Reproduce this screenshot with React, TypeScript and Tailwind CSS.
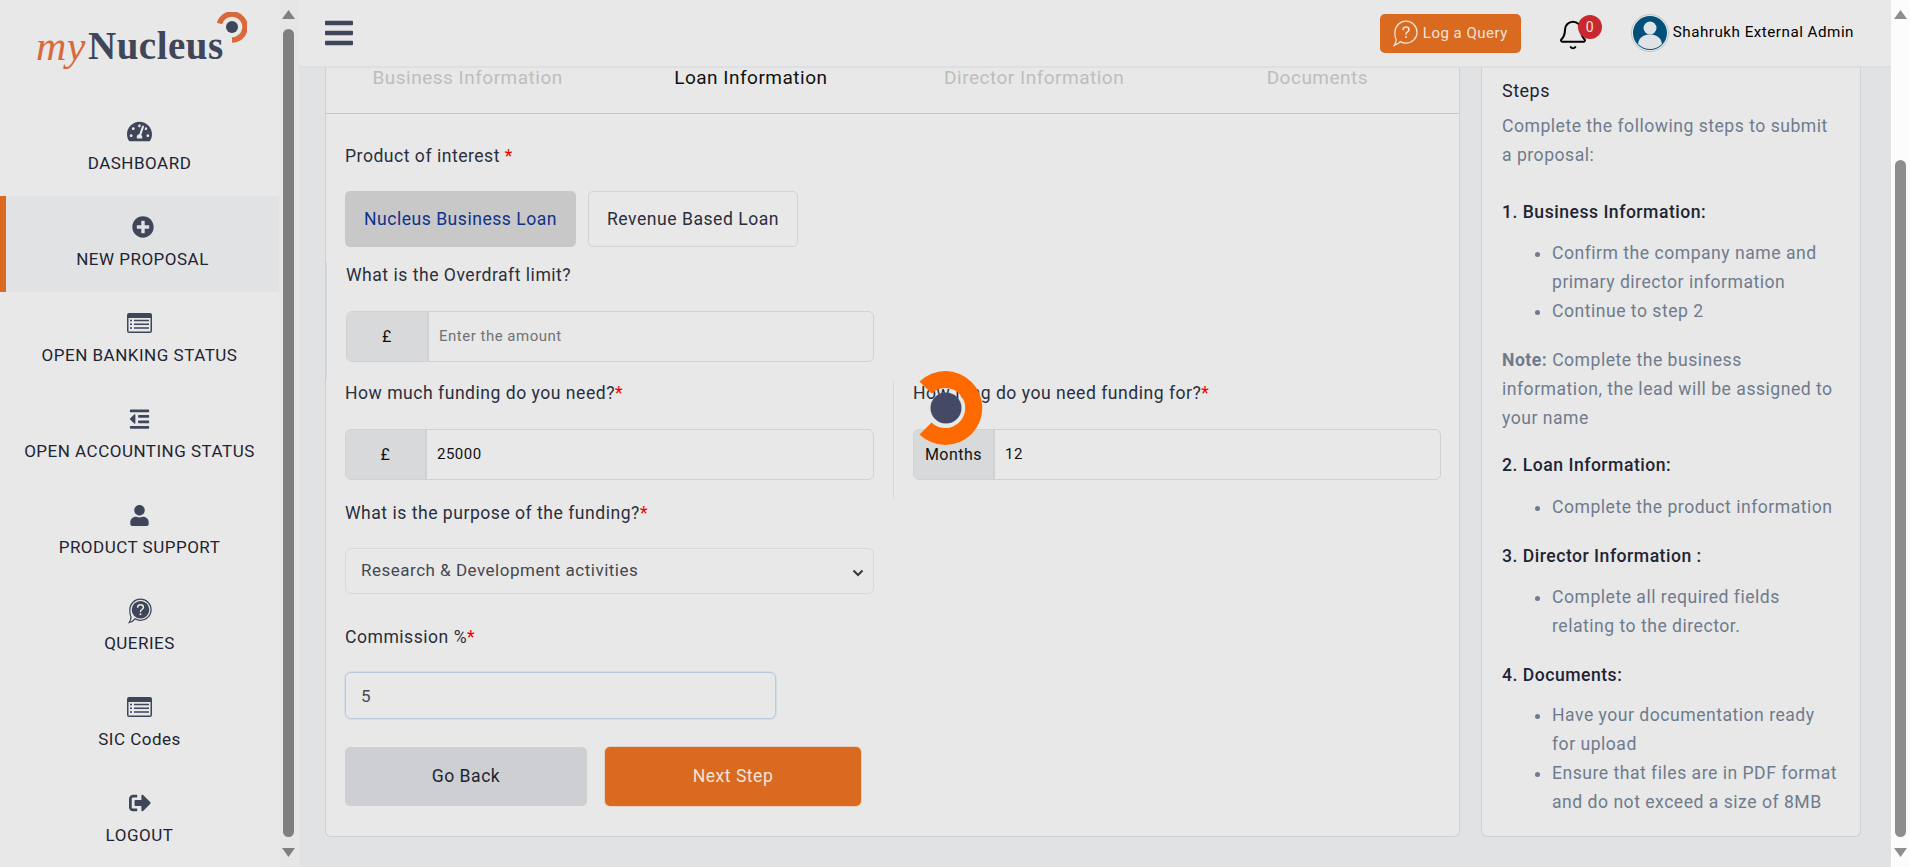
import type { ReactNode } from "react";
import { FaBars, FaOutdent, FaPlusCircle, FaSignOutAlt, FaTachometerAlt, FaUser } from "react-icons/fa";
import { Bell } from "lucide-react";

function QueryBubble({ className, fill, stroke, mark }: { className?: string; fill: string; stroke: string; mark: string }) {
  return (
    <svg className={className} viewBox="0 0 24 26" fill="none">
      <path d="M12.5 1.2c5.900 0 10.600 4.700 10.600 10.500s-4.700 10.600-10.600 10.600c-2 0-3.900-.5-5.500-1.500-1.300 1.900-3.300 3-5.800 3.700 1.100-1.700 1.800-3.500 1.900-5.700C1.900 17 1.800 14.400 1.800 11.700 1.800 5.900 6.600 1.200 12.500 1.200z" stroke={stroke} strokeWidth="1.200" />
      <circle cx="12.500" cy="11.700" r="8.800" fill={fill} />
      <path d="M9.600 9.200c.2-1.600 1.400-2.500 2.900-2.500 1.600 0 2.900 1 2.900 2.500 0 2.300-2.900 2.300-2.900 4.400" stroke={mark} strokeWidth="1.500" strokeLinecap="round" />
      <circle cx="12.500" cy="16.300" r="1" fill={mark} />
    </svg>
  );
}

// list-alt with the thick title band along the top
function ListBox() {
  return (
    <svg className="h-[20px] w-[25px]" viewBox="0 0 25 20">
      <rect width="25" height="20" rx="2" fill="#3f4659" />
      <rect x="1.500" y="5" width="22" height="13.500" fill="#e8e8e8" />
      <path d="M7 7.500h15M7 11.200h15M7 15h15" stroke="#3f4659" strokeWidth="1.500" />
      <path d="M3 7.500h2M3 11.200h2M3 15h2" stroke="#3f4659" strokeWidth="1.500" />
    </svg>
  );
}

function ScrollTrack({ track, thumb, arrow }: { track: string; thumb: string; arrow: string }) {
  return (
    <div className={`flex h-[867px] w-[19px] shrink-0 flex-col items-center ${track}`}>
      <svg className={`mt-[10px] h-[9px] w-[13px] ${arrow}`} viewBox="0 0 13 9" fill="currentColor">
        <path d="M6.500 0 13 9H0z" />
      </svg>
      <div className={`w-[11px] flex-1 rounded-[6px] ${thumb}`} />
      <svg className={`mb-[10px] mt-[11px] h-[9px] w-[13px] ${arrow}`} viewBox="0 0 13 9" fill="currentColor">
        <path d="M0 0h13L6.500 9z" />
      </svg>
    </div>
  );
}

const navItems: { label: string; icon: ReactNode; active?: boolean }[] = [
  { label: "DASHBOARD", icon: <FaTachometerAlt className="size-[25px]" /> },
  { label: "NEW PROPOSAL", icon: <FaPlusCircle className="size-[22px]" />, active: true },
  { label: "OPEN BANKING STATUS", icon: <ListBox /> },
  { label: "OPEN ACCOUNTING STATUS", icon: <FaOutdent className="h-[22px] w-[25px]" /> },
  { label: "PRODUCT SUPPORT", icon: <FaUser className="size-[21px]" /> },
  {
    label: "QUERIES",
    icon: <QueryBubble className="h-[26px] w-[24px]" fill="#3f4659" stroke="#3f4659" mark="#e8e8e8" />
  },
  { label: "SIC Codes", icon: <ListBox /> },
  { label: "LOGOUT", icon: <FaSignOutAlt className="size-[22px]" /> }
];

function Sidebar() {
  return (
    <aside className="flex h-[867px] w-[299px] shrink-0 bg-[#e8e8e8]">
      <div className="w-[279px] shrink-0">
        <div className="relative flex h-[100px] items-start pl-[36px] pt-[18px]">
          <span className="font-['Liberation_Serif',serif] text-[42px] italic leading-[56px] text-[#d9683a]">my</span>
          <span className="ml-[2px] font-['Liberation_Serif',serif] text-[39px] font-bold leading-[56px] text-[#3f4659]">
            Nucleus
          </span>
          <svg className="absolute left-[216px] top-[12px] size-[31px]" viewBox="0 0 31 31" fill="none">
            <path d="M3.500 11.500A13 13 0 1 1 16 28" stroke="#d9683a" strokeWidth="5.500" />
            <circle cx="16" cy="15" r="6" fill="#3f4659" />
          </svg>
        </div>
        {navItems.map((item) => (
          <div
            key={item.label}
            className={`flex h-[96px] flex-col items-center pt-[19px] ${
              item.active ? "border-l-[6px] border-[#d96a20] bg-[#e1e2e4]" : ""
            }`}
          >
            <div className="flex h-6 items-center justify-center text-[#3f4659]">{item.icon}</div>
            <span className="mt-2 text-[17px] leading-6 text-[#1f2433]">{item.label}</span>
          </div>
        ))}
      </div>
      <ScrollTrack track="bg-[#e6e6e6]" thumb="mt-[10px] bg-[#7f7f7f]" arrow="text-[#7f7f7f]" />
    </aside>
  );
}

function Header() {
  return (
    <header className="flex h-[68px] shrink-0 items-center border-b-2 border-[#dedfe1] bg-[#e8e8e8] pl-[26px]">
      <FaBars className="h-[32px] w-[28px] text-[#3f4659]" />
      <button
        type="button"
        className="ml-auto flex h-[39px] w-[141px] items-center justify-center gap-[5px] rounded-[5px] bg-[#d96a20] text-[15px] text-[#f0e4da]"
      >
        <QueryBubble className="h-[27px] w-[25px]" fill="transparent" stroke="#f0e4da" mark="#f0e4da" />
        Log a Query
      </button>
      <div className="relative ml-[36px] h-[40px] w-[39px]">
        <Bell className="mt-[6px] size-[32px] text-black" strokeWidth={1.500} />
        <span className="absolute left-[21px] top-[2px] flex size-[24px] items-center justify-center rounded-full bg-[#c8282f] text-[14px] text-[#f0e4da]">
          0
        </span>
      </div>
      <svg className="ml-[35px] size-[38px]" viewBox="0 0 38 38">
        <circle cx="19" cy="19" r="18.500" fill="none" stroke="#c2c2c2" />
        <circle cx="19" cy="19" r="17" fill="#014f7a" />
        <circle cx="19" cy="14" r="6.500" fill="#dfe3e6" />
        <path d="M7 30c1-7 6-9.500 12-9.500S30 23 31 30c-3 3-7.500 5-12 5S10 33 7 30z" fill="#dfe3e6" />
      </svg>
      <span className="ml-[4px] mr-[37px] mt-[-2px] text-[15.200px] text-black">Shahrukh External Admin</span>
    </header>
  );
}

function Label({ children, required }: { children: ReactNode; required?: boolean }) {
  return (
    <p className="text-[17.600px] leading-6 text-[#2a2f3c]">
      {children}
      {required ? <span className="text-[#f00000]">*</span> : null}
    </p>
  );
}

function AddonInput({ addon, value, placeholder, wide }: { addon: string; value?: string; placeholder?: string; wide?: boolean }) {
  return (
    <div className="mt-6 flex h-[51px] overflow-hidden rounded-[6px] border border-[#cfd1d4]">
      <span className={`flex shrink-0 items-center justify-center border-r-2 border-[#cfd1d4] bg-[#d8d9db] text-[16px] text-[#111] ${wide ? "w-[82px]" : "w-[81px]"}`}>
        {addon}
      </span>
      <input
        readOnly
        value={value ?? ""}
        placeholder={placeholder}
        className="min-w-0 flex-1 bg-transparent px-[10px] text-[15px] text-[#111] outline-none placeholder:text-[15px] placeholder:text-[#6f7276]"
      />
    </div>
  );
}

function LoanForm() {
  return (
    <section className="flex w-[1135px] shrink-0 flex-col rounded-b-[6px] border-x border-b border-[#cdd0d4] bg-[#e8e8e8]">
      <div className="grid h-[46px] shrink-0 grid-cols-4 border-b border-[#c3c5c8] text-center text-[19px] leading-[19px] text-[#bdbdbd]">
        <span>Business Information</span>
        <span className="text-[#111]">Loan Information</span>
        <span>Director Information</span>
        <span>Documents</span>
      </div>

      <div className="pl-[19px] pt-[30px]">
        <p className="text-[17.600px] leading-6 text-[#2a2f3c]">
          Product of interest <span className="text-[#f00000]">*</span>
        </p>
        <div className="mt-[23px] flex gap-[12px]">
          <button type="button" className="h-[56px] w-[231px] rounded-[5px] bg-[#c8c8c8] text-[17.600px] text-[#10318a]">
            Nucleus Business Loan
          </button>
          <button type="button" className="h-[56px] w-[210px] rounded-[5px] border border-[#d2d3d5] text-[17.600px] text-[#2a2f3c]">
            Revenue Based Loan
          </button>
        </div>
      </div>

      <div className="mt-[15px] border-l border-[#d4d8de] pb-[18px] pl-[19px] pr-[585px] pt-px">
        <Label>What is the Overdraft limit?</Label>
        <AddonInput addon="£" placeholder="Enter the amount" wide />
      </div>

      <div className="flex h-[118px] pl-[19px] pt-px">
        <div className="w-[529px] shrink-0">
          <Label required>How much funding do you need?</Label>
          <AddonInput addon="£" value="25000" />
        </div>
        <div className="ml-[19px] w-[548px] shrink-0 border-l border-[#d4d8de] pl-[19px]">
          <Label required>How long do you need funding for?</Label>
          <AddonInput addon="Months" value="12" />
        </div>
      </div>

      <div className="w-[548px] pl-[19px] pt-[3px]">
        <Label required>What is the purpose of the funding?</Label>
        <div className="relative mt-[23px]">
          <select className="h-[46px] w-full appearance-none rounded-[6px] border border-[#d8d9db] bg-transparent pl-[15px] text-[17px] text-[#44484f] outline-none">
            <option>Research &amp; Development activities</option>
          </select>
          <svg className="absolute right-[10px] top-[19px] size-[12px]" viewBox="0 0 12 12" fill="none">
            <path d="M1.500 3.500 6 8l4.500-4.500" stroke="#343a40" strokeWidth="2" />
          </svg>
        </div>
      </div>

      <div className="pl-[19px] pt-[31px]">
        <Label required>Commission %</Label>
        <input
          readOnly
          value="5"
          className="mt-[23px] h-[47px] w-[431px] rounded-[6px] border border-[#b6c9de] bg-transparent px-[15px] text-[17px] text-[#44484f] outline-none ring-1 ring-[#d5dde6]"
        />
      </div>

      <div className="mt-[28px] flex gap-[18px] pl-[19px]">
        <button type="button" className="h-[59px] w-[242px] rounded-[5px] bg-[#cdcfd3] text-[17.600px] text-[#1f2433]">
          Go Back
        </button>
        <button
          type="button"
          className="h-[59px] w-[256px] rounded-[5px] bg-[#d96a20] text-[17.600px] text-[#f0e4da] ring-1 ring-[#e6d2c4]"
        >
          Next Step
        </button>
      </div>
    </section>
  );
}

function StepList({ items, className }: { items: string[]; className: string }) {
  return (
    <ul className={`list-disc pl-[50px] ${className}`}>
      {items.map((item) => (
        <li key={item}>{item}</li>
      ))}
    </ul>
  );
}

function StepsPanel() {
  return (
    <aside className="w-[380px] shrink-0 rounded-b-[6px] border-x border-b border-[#cdd0d4] bg-[#e8e8e8] pl-[20px] pr-[18px] pt-[8px] text-[17.600px] leading-[29px] text-[#6f7b8d]">
      <h3 className="text-[18px] text-[#1f2433]">Steps</h3>
      <p className="mt-[7px]">Complete the following steps to submit a proposal:</p>
      <h4 className="mt-[28px] font-medium text-[#1f2433]">1. Business Information:</h4>
      <StepList className="mt-[12px]" items={["Confirm the company name and primary director information", "Continue to step 2"]} />
      <p className="mt-[20px]">
        <strong className="font-bold">Note:</strong> Complete the business information, the lead will be assigned to your name
      </p>
      <h4 className="mt-[18px] font-medium text-[#1f2433]">2. Loan Information:</h4>
      <StepList className="mt-[13px]" items={["Complete the product information"]} />
      <h4 className="mt-[20px] font-medium text-[#1f2433]">3. Director Information :</h4>
      <StepList className="mt-[12px]" items={["Complete all required fields relating to the director."]} />
      <h4 className="mt-[20px] font-medium text-[#1f2433]">4. Documents:</h4>
      <StepList
        className="mt-[11px]"
        items={["Have your documentation ready for upload", "Ensure that files are in PDF format and do not exceed a size of 8MB"]}
      />
    </aside>
  );
}

export default function App() {
  return (
    <div className="flex h-[867px] w-[1910px] overflow-hidden font-['Roboto',sans-serif] tracking-[0.5px]">
      <Sidebar />
      <main className="flex h-[867px] w-[1592px] shrink-0 flex-col bg-[#e1e2e4]">
        <Header />
        <div className="flex flex-1 gap-[21px] pb-[30px] pl-[26px]">
          <LoanForm />
          <StepsPanel />
        </div>
      </main>
      <ScrollTrack track="bg-[#fcfcfc]" thumb="mt-[141px] bg-[#8e8e8e]" arrow="text-[#8e8e8e]" />
      {/* loading spinner sitting over the form */}
      <svg className="pointer-events-none absolute left-[908px] top-[370px] size-[76px]" viewBox="0 0 76 76" fill="none">
        <path d="M11.500 11.500a37 37 0 1 1 0 53l12-12a20 20 0 1 0 0-29z" fill="#ff6a00" />
        <circle cx="38" cy="38" r="15.500" fill="#444a66" />
      </svg>
    </div>
  );
}
